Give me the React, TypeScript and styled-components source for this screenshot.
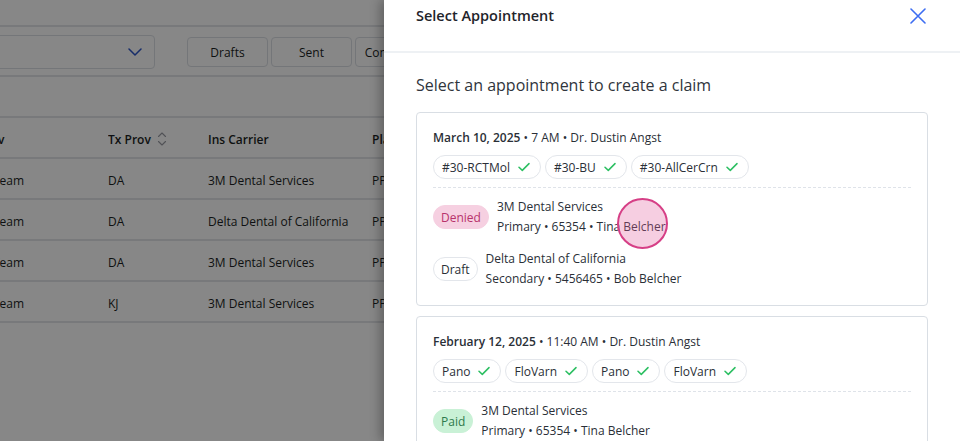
import styled, { createGlobalStyle } from 'styled-components';

const GlobalStyle = createGlobalStyle`
  html, body {
    margin: 0;
    padding: 0;
    width: 960px;
    height: 441px;
    overflow: hidden;
    font-family: 'Open Sans', 'Liberation Sans', sans-serif;
    background: #fff;
  }
  * {
    box-sizing: border-box;
  }
`;

const Screen = styled.div`
  position: relative;
  width: 960px;
  height: 441px;
  overflow: hidden;
  display: flex;
`;

/* ---------- page behind the drawer ---------- */

const Page = styled.div`
  flex: 1;
  min-width: 0;
  display: flex;
  flex-direction: column;
  color: #1c1f24;
  font-size: 12px;
`;

const TopBar = styled.div`
  height: 27px;
  flex-shrink: 0;
  border-bottom: 2px solid #e2e4e9;
`;

const FilterBar = styled.div`
  height: 50px;
  flex-shrink: 0;
  display: flex;
  align-items: center;
  gap: 32px;
  border-bottom: 2px solid #e2e4e9;
  padding-top: 2px;
`;

const Dropdown = styled.div`
  flex-shrink: 0;
  width: 185px;
  margin-left: -30px;
  height: 34px;
  border: 1px solid #dcdfe5;
  border-radius: 4px;
  display: flex;
  align-items: center;
  justify-content: flex-end;
  padding-right: 12px;
`;

const ButtonGroup = styled.div`
  display: flex;
  flex-shrink: 0;
  gap: 3px;
`;

const FilterButton = styled.div`
  width: 81px;
  height: 30px;
  border: 1px solid #dcdfe5;
  border-radius: 4px;
  display: flex;
  align-items: center;
  justify-content: center;
  font-size: 12px;
  color: #1c1f24;
`;

const Table = styled.div`
  margin-top: 39px;
  border-top: 2px solid #e2e4e9;
`;

const Row = styled.div<{ $head?: boolean }>`
  display: grid;
  grid-template-columns: 108px 100px 164px 1fr;
  height: 41px;
  padding-top: 3px;
  align-items: center;
  border-bottom: 2px solid #e2e4e9;
  font-weight: ${(p) => (p.$head ? 600 : 400)};
  white-space: nowrap;
  overflow: hidden;
`;

const Cell = styled.div`
  display: flex;
  align-items: center;
  gap: 6px;
  overflow: hidden;
`;

const Clipped = styled.span<{ $shift: number }>`
  margin-left: ${(p) => p.$shift}px;
`;

const Overlay = styled.div`
  position: absolute;
  inset: 0;
  background: rgba(0, 0, 0, 0.47);
  pointer-events: none;
`;

/* ---------- drawer ---------- */

const Drawer = styled.aside`
  position: relative;
  z-index: 2;
  width: 576px;
  flex-shrink: 0;
  height: 441px;
  background: #fff;
  box-shadow: -4px 0 10px rgba(0, 0, 0, 0.28);
  display: flex;
  flex-direction: column;
  color: #262b33;
`;

const DrawerHeader = styled.header`
  height: 53px;
  flex-shrink: 0;
  display: flex;
  justify-content: space-between;
  align-items: flex-start;
  padding: 5px 32px 0 32px;
  border-bottom: 2px solid #eef1f4;
`;

const Title = styled.h2`
  margin: 0;
  font-size: 14.5px;
  line-height: 22px;
  font-weight: 600;
  color: #1f242b;
`;

const CloseButton = styled.button`
  border: 0;
  background: none;
  padding: 0;
  margin-top: 3px;
  margin-right: 2px;
  width: 16px;
  height: 16px;
  color: #3d6df2;
  cursor: pointer;
`;

const DrawerBody = styled.div`
  padding: 20px 32px 0 32px;
  display: flex;
  flex-direction: column;
  gap: 10px;
`;

const Subtitle = styled.p`
  margin: 0 0 5px 0;
  font-size: 16px;
  line-height: 24px;
  color: #30353c;
`;

const Card = styled.div`
  position: relative;
  border: 1px solid #d9dee4;
  border-radius: 4px;
  padding: 16px 16px 16px 16px;
  display: flex;
  flex-direction: column;
  flex-shrink: 0;
`;

const CardTitle = styled.div`
  font-size: 12px;
  line-height: 18px;
  color: #2a2f37;

  b {
    font-weight: 600;
  }
`;

const Chips = styled.div`
  display: flex;
  gap: 4px;
  margin-top: 8px;
`;

const Chip = styled.span`
  height: 24px;
  display: inline-flex;
  align-items: center;
  gap: 8px;
  padding: 0 10px 0 8px;
  border: 1px solid #e3e6eb;
  border-radius: 12px;
  font-size: 12px;
  color: #2a2f37;
`;

const Divider = styled.div`
  margin: 8px 0 9px 0;
  border-top: 1px dashed #dfe3e9;
`;

const Claims = styled.div`
  display: flex;
  flex-direction: column;
  gap: 12px;
`;

const Claim = styled.div`
  display: flex;
  align-items: center;
  gap: 8px;
`;

const tones = {
  denied: { bg: '#f6d0e1', fg: '#b8336c', border: '#f6d0e1' },
  draft: { bg: '#fff', fg: '#2a2f37', border: '#e3e6eb' },
  paid: { bg: '#c9f1d6', fg: '#2f7a4c', border: '#c9f1d6' },
};

type Tone = keyof typeof tones;

const Status = styled.span<{ $tone: Tone }>`
  height: 24px;
  padding: 0 7px;
  border-radius: 12px;
  display: inline-flex;
  align-items: center;
  font-size: 12px;
  background: ${(p) => tones[p.$tone].bg};
  color: ${(p) => tones[p.$tone].fg};
  border: 1px solid ${(p) => tones[p.$tone].border};
`;

const ClaimText = styled.div`
  font-size: 12px;
  line-height: 20px;
  color: #2a2f37;
`;

const Ripple = styled.span`
  position: absolute;
  left: 200px;
  top: 85px;
  width: 51px;
  height: 51px;
  border-radius: 50%;
  border: 2px solid #d63f86;
  background: rgba(224, 92, 156, 0.3);
  pointer-events: none;
`;

/* ---------- icons ---------- */

const Check = () => (
  <svg width="12" height="10" viewBox="0 0 12 10" fill="none">
    <path d="M1 5.2 4.3 8.4 11 1.6" stroke="#2cbf62" strokeWidth="1.5" strokeLinecap="round" strokeLinejoin="round" />
  </svg>
);

const CloseIcon = () => (
  <svg width="16" height="16" viewBox="0 0 16 16" fill="none">
    <path d="M1 1 15 15M15 1 1 15" stroke="currentColor" strokeWidth="1.6" strokeLinecap="round" />
  </svg>
);

const Chevron = () => (
  <svg width="14" height="8" viewBox="0 0 14 8" fill="none">
    <path d="M1 1 7 7 13 1" stroke="#2c55c9" strokeWidth="1.5" strokeLinecap="round" strokeLinejoin="round" />
  </svg>
);

const SortIcon = () => (
  <svg width="10" height="16" viewBox="0 0 10 16" fill="none">
    <path d="M1.5 5.5 5 2 8.5 5.5M1.5 10.5 5 14 8.5 10.5" stroke="#9a9ca3" strokeWidth="1.1" strokeLinecap="round" strokeLinejoin="round" />
  </svg>
);

/* ---------- data ---------- */

const rows = [
  { prov: 'DA', carrier: '3M Dental Services' },
  { prov: 'DA', carrier: 'Delta Dental of California' },
  { prov: 'DA', carrier: '3M Dental Services' },
  { prov: 'KJ', carrier: '3M Dental Services' },
];

interface ClaimItem {
  status: string;
  tone: Tone;
  carrier: string;
  detail: string;
}

interface Appointment {
  date: string;
  rest: string;
  codes: string[];
  claims: ClaimItem[];
  ripple?: boolean;
}

const appointments: Appointment[] = [
  {
    date: 'March 10, 2025',
    rest: ' • 7 AM • Dr. Dustin Angst',
    codes: ['#30-RCTMol', '#30-BU', '#30-AllCerCrn'],
    ripple: true,
    claims: [
      { status: 'Denied', tone: 'denied', carrier: '3M Dental Services', detail: 'Primary • 65354 • Tina Belcher' },
      { status: 'Draft', tone: 'draft', carrier: 'Delta Dental of California', detail: 'Secondary • 5456465 • Bob Belcher' },
    ],
  },
  {
    date: 'February 12, 2025',
    rest: ' • 11:40 AM • Dr. Dustin Angst',
    codes: ['Pano', 'FloVarn', 'Pano', 'FloVarn'],
    claims: [
      { status: 'Paid', tone: 'paid', carrier: '3M Dental Services', detail: 'Primary • 65354 • Tina Belcher' },
    ],
  },
];

export default function App() {
  return (
    <>
      <GlobalStyle />
      <Screen>
        <Page>
          <TopBar />
          <FilterBar>
            <Dropdown>
              <Chevron />
            </Dropdown>
            <ButtonGroup>
              <FilterButton>Drafts</FilterButton>
              <FilterButton>Sent</FilterButton>
              <FilterButton>Completed</FilterButton>
            </ButtonGroup>
          </FilterBar>
          <Table>
            <Row $head>
              <Cell>
                <Clipped $shift={-22}>Prov</Clipped>
              </Cell>
              <Cell>
                Tx Prov <SortIcon />
              </Cell>
              <Cell>Ins Carrier</Cell>
              <Cell>Plan</Cell>
            </Row>
            {rows.map((r, i) => (
              <Row key={i}>
                <Cell>
                  <Clipped $shift={-7}>Team</Clipped>
                </Cell>
                <Cell>{r.prov}</Cell>
                <Cell>{r.carrier}</Cell>
                <Cell>PPO</Cell>
              </Row>
            ))}
          </Table>
        </Page>
        <Overlay />

        <Drawer>
          <DrawerHeader>
            <Title>Select Appointment</Title>
            <CloseButton aria-label="Close">
              <CloseIcon />
            </CloseButton>
          </DrawerHeader>
          <DrawerBody>
            <Subtitle>Select an appointment to create a claim</Subtitle>
            {appointments.map((a, i) => (
              <Card key={i}>
                <CardTitle>
                  <b>{a.date}</b>
                  {a.rest}
                </CardTitle>
                <Chips>
                  {a.codes.map((c, j) => (
                    <Chip key={j}>
                      {c}
                      <Check />
                    </Chip>
                  ))}
                </Chips>
                <Divider />
                <Claims>
                  {a.claims.map((c, j) => (
                    <Claim key={j}>
                      <Status $tone={c.tone}>{c.status}</Status>
                      <ClaimText>
                        <div>{c.carrier}</div>
                        <div>{c.detail}</div>
                      </ClaimText>
                    </Claim>
                  ))}
                </Claims>
                {a.ripple && <Ripple />}
              </Card>
            ))}
          </DrawerBody>
        </Drawer>
      </Screen>
    </>
  );
}
